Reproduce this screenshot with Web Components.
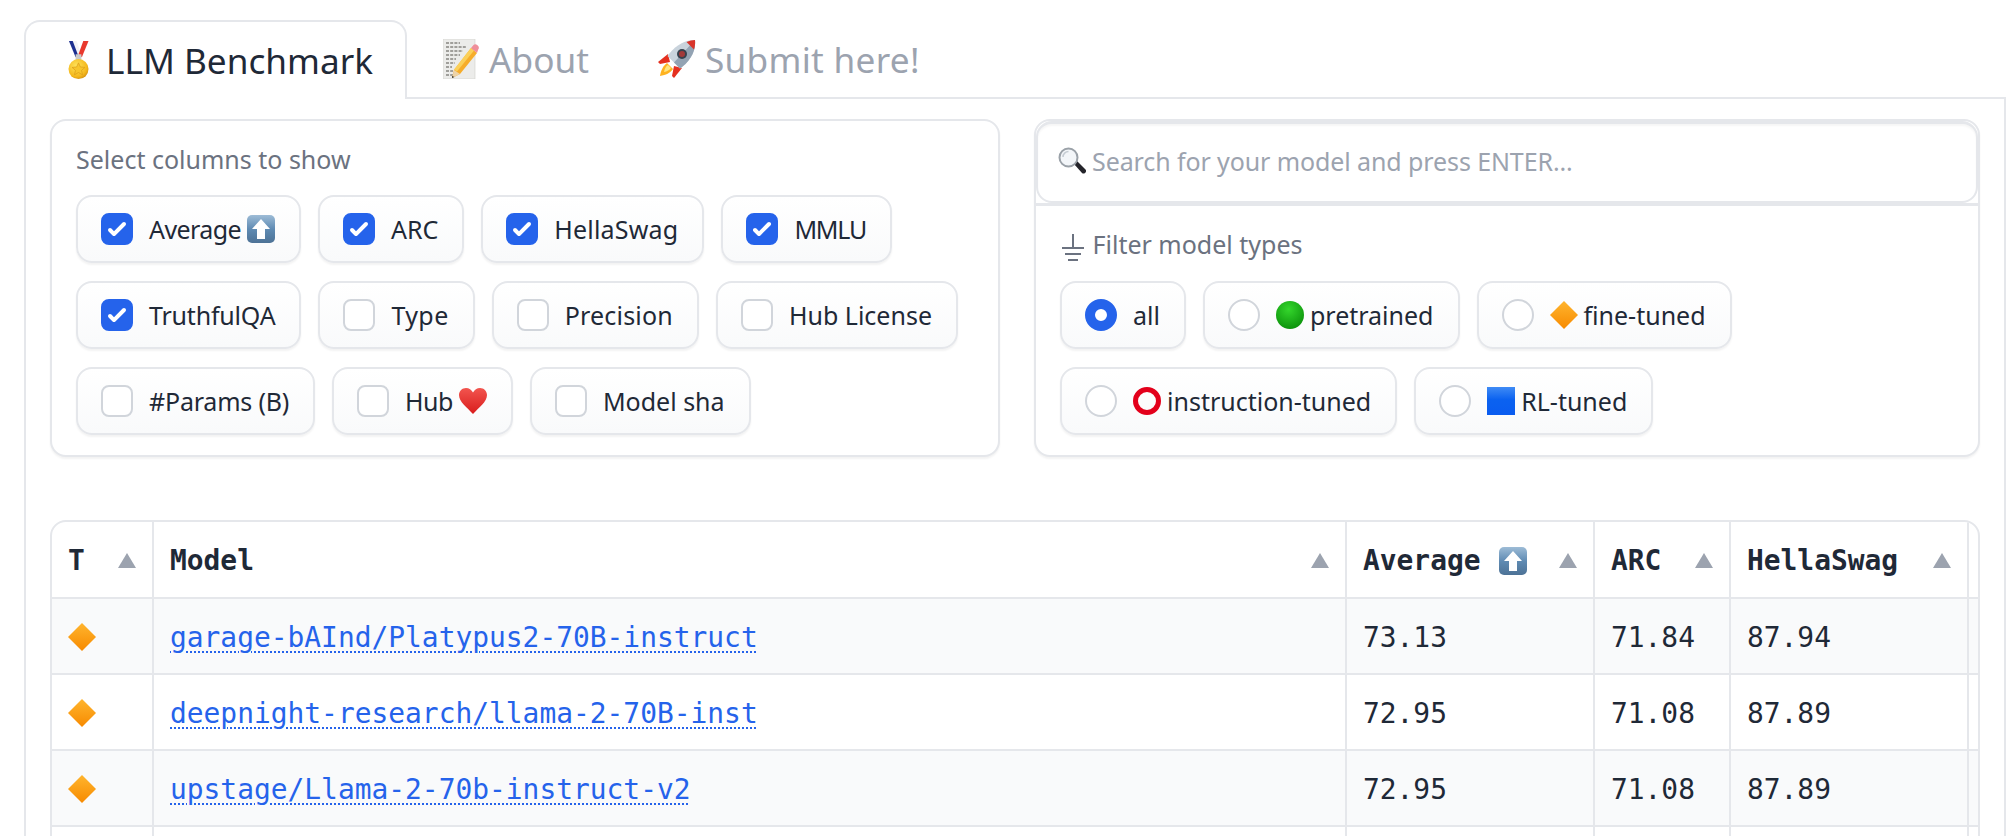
<!DOCTYPE html>
<html lang="en">
<head>
<meta charset="UTF-8">
<title>LLM Benchmark</title>
<style>
  html, body { margin: 0; height: 836px; overflow: hidden; background: #fff; }
  body { padding: 20px 0 0 24px; box-sizing: border-box; font-family: "Noto Sans", sans-serif; color: #1f2937; }
</style>
</head>
<body>

<tab-bar>
  <tab-button active icon="medal">LLM Benchmark</tab-button>
  <tab-button icon="memo">About</tab-button>
  <tab-button icon="rocket"><span style="letter-spacing:.3px">Submit here!</span></tab-button>
</tab-bar>

<tab-panel>
  <controls-row>
    <option-card>
      <span slot="title">Select columns to show</span>
      <option-chip checked><span style="letter-spacing:-.6px">Average</span><emoji-icon name="up" size="28"></emoji-icon></option-chip>
      <option-chip checked>ARC</option-chip>
      <option-chip checked><span style="letter-spacing:.2px">HellaSwag</span></option-chip>
      <option-chip checked><span style="letter-spacing:-1.2px">MMLU</span></option-chip>
      <option-chip checked><span style="letter-spacing:-.2px">TruthfulQA</span></option-chip>
      <option-chip><span style="letter-spacing:.4px">Type</span></option-chip>
      <option-chip><span style="letter-spacing:.2px">Precision</span></option-chip>
      <option-chip>Hub License</option-chip>
      <option-chip><span style="letter-spacing:-.2px">#Params (B)</span></option-chip>
      <option-chip><span style="letter-spacing:-.5px">Hub</span><emoji-icon name="heart" size="28"></emoji-icon></option-chip>
      <option-chip>Model sha</option-chip>
    </option-card>
    <search-card>
      <option-card flat>
        <span slot="title"><emoji-icon name="ground" size="22" style="margin:0 2px 0 2px"></emoji-icon> Filter model types</span>
        <option-chip radio checked>all</option-chip>
        <option-chip radio><emoji-icon name="green" size="28"></emoji-icon> pretrained</option-chip>
        <option-chip radio><emoji-icon name="diamond" size="28"></emoji-icon> fine-tuned</option-chip>
        <option-chip radio><emoji-icon name="ring" size="28"></emoji-icon> instruction-tuned</option-chip>
        <option-chip radio><emoji-icon name="square" size="28"></emoji-icon> RL-tuned</option-chip>
      </option-card>
    </search-card>
  </controls-row>
  <leaderboard-table></leaderboard-table>
</tab-panel>

<script>
  const EMOJI = {
    medal: `<svg viewBox="0 0 22 40" width="21" height="40">
      <defs><radialGradient id="g" cx=".4" cy=".35" r=".75"><stop offset="0" stop-color="#ffe45c"/><stop offset=".7" stop-color="#f4b81c"/><stop offset="1" stop-color="#c98410"/></radialGradient></defs>
      <path d="M1 0h5l6 14-4 3z" fill="#1c2f8f"/><path d="M5 0h4l4 11-2 5z" fill="#f3f3f6"/>
      <path d="M16 0h5.500l-7 17-3.500-3z" fill="#e8392e"/>
      <rect x="8" y="14" width="6" height="6" fill="#c9c9c9"/>
      <circle cx="11" cy="29.500" r="10.500" fill="url(#g)"/>
      <path d="M11 23l2 4.300 4.700.5-3.500 3.100 1 4.600-4.200-2.400-4.200 2.400 1-4.600-3.500-3.100 4.700-.5z" fill="#f7c52c" stroke="#d99a16" stroke-width=".7"/>
    </svg>`,
    memo: `<svg viewBox="0 0 36 40" width="36" height="40">
      <rect x="0" y="0" width="32" height="40" fill="#ececea" stroke="#cfcfca" stroke-width=".6"/>
      <g stroke="#55524c" stroke-width="1" stroke-dasharray="3 1.200">
        <path d="M3 4h14M3 8h20M3 12h17M3 16h14M3 20h10M3 24h9M3 28h6M3 32h7M3 36h8"/>
      </g>
      <path d="M28 9l6 5-17 21-8 4 2-8z" fill="#f6ad2b"/>
      <path d="M28 9l3 2.500-17 21-3-2z" fill="#fbd05a"/>
      <path d="M28 9l2.500-3c1-1 2.500-1 3.700 0l1 1c1 1 .8 2.500 0 3.500L34 14z" fill="#ef8f9a"/>
      <path d="M11 31l6 4-8 4z" fill="#edd3a8"/><path d="M9 37l2.500 1-2.500 1z" fill="#333"/>
    </svg>`,
    rocket: `<svg viewBox="0 0 40 40" width="40" height="40">
      <path d="M3 37c1-6 3-10 7-13l6 6c-3 4-7 6-13 7z" fill="#ffb320"/>
      <path d="M7 33c.5-3 2-6 4-7l3 3c-1.500 2-4 3.500-7 4z" fill="#ffe680"/>
      <path d="M11 15L1 23l2 2 10-2z" fill="#e5301f"/>
      <path d="M25 29l-8 10-2-2 2-10z" fill="#e5301f"/>
      <path d="M38 1c1 9-3 19-13 27l-2 1.500L10.500 17 12 15C20 5 29 1 38 1z" fill="#c9d3dc"/>
      <path d="M38 1c1 9-3 19-13 27l-2 1.500-6-6z" fill="#93a3b3"/>
      <path d="M38 1c.3 3 0 6-1 9.500L29.500 3C32.500 1.800 35 1.200 38 1z" fill="#d9342a"/>
      <circle cx="25" cy="15" r="5" fill="#37424e"/><circle cx="25" cy="15" r="3" fill="#a23a3a"/>
    </svg>`,
    up: `<svg viewBox="0 0 28 28" width="100%" height="100%">
      <defs><linearGradient id="g" x1="0" y1="0" x2="0" y2="1"><stop offset="0" stop-color="#9dbcd6"/><stop offset=".5" stop-color="#5f8bb3"/><stop offset="1" stop-color="#4d7296"/></linearGradient></defs>
      <rect width="28" height="28" rx="5" fill="url(#g)"/>
      <path d="M14 4l9 10h-5v10h-8V14H5z" fill="#fff"/>
    </svg>`,
    heart: `<svg viewBox="0 0 30 28" width="100%" height="100%">
      <defs><linearGradient id="g" x1="0" y1="0" x2="0" y2="1"><stop offset="0" stop-color="#f2554f"/><stop offset="1" stop-color="#d91c1c"/></linearGradient></defs>
      <path d="M15 28C9 21 0 15 0 7.500 0 3 3.500 0 7.500 0 10.800 0 13.500 1.800 15 5 16.500 1.800 19.200 0 22.500 0 26.500 0 30 3 30 7.500 30 15 21 21 15 28z" fill="url(#g)"/>
    </svg>`,
    search: `<svg viewBox="0 0 28 28" width="100%" height="100%">
      <path d="M16 17l3-3 8.500 8.500c.8.800.8 2 0 3l-.5.500c-1 .8-2.200.8-3 0z" fill="#24242a"/>
      <circle cx="10.500" cy="10.500" r="9" fill="#f3f6f9" stroke="#9aa1a8" stroke-width="2"/>
      <path d="M5 10c0-3 2.500-5.500 5.500-5.500" fill="none" stroke="#c5ccd3" stroke-width="1.500"/>
    </svg>`,
    ground: `<svg viewBox="0 0 22 28" width="22" height="28" fill="none" stroke="#6b7280" stroke-width="2">
      <path d="M11 1v13M0 15h22M3 21h16M6 27h10"/>
    </svg>`,
    green: `<svg viewBox="0 0 28 28" width="100%" height="100%">
      <defs><radialGradient id="g" cx=".45" cy=".3" r=".75"><stop offset="0" stop-color="#34d62c"/><stop offset="1" stop-color="#0a8f0a"/></radialGradient></defs>
      <circle cx="14" cy="14" r="14" fill="url(#g)"/>
    </svg>`,
    diamond: `<svg viewBox="0 0 28 28" width="100%" height="100%">
      <defs><linearGradient id="g" x1="0" y1="0" x2="0" y2="1"><stop offset="0" stop-color="#ffb52e"/><stop offset="1" stop-color="#f78a00"/></linearGradient></defs>
      <path d="M14 0l14 14-14 14L0 14z" fill="url(#g)"/>
    </svg>`,
    ring: `<svg viewBox="0 0 28 28" width="100%" height="100%">
      <circle cx="14" cy="14" r="11.500" fill="none" stroke="#e3001b" stroke-width="5"/>
    </svg>`,
    square: `<svg viewBox="0 0 28 28" width="100%" height="100%">
      <defs><linearGradient id="g" x1="0" y1="0" x2="0" y2="1"><stop offset="0" stop-color="#3f8bf5"/><stop offset=".45" stop-color="#0b62f0"/><stop offset="1" stop-color="#0a5cf0"/></linearGradient></defs>
      <rect width="28" height="28" fill="url(#g)"/>
    </svg>`
  };

  class EmojiIcon extends HTMLElement {
    connectedCallback() {
      const size = this.getAttribute('size');
      this.attachShadow({ mode: 'open' }).innerHTML = `
        <style>
          :host { display: inline-flex; align-items: center; justify-content: center; vertical-align: middle; flex: none; }
          svg { display: block; }
        </style>
        ${EMOJI[this.getAttribute('name')]}`;
      if (size) {
        this.style.width = size + 'px';
        this.style.height = size + 'px';
      }
    }
  }
  customElements.define('emoji-icon', EmojiIcon);

  class TabBar extends HTMLElement {
    constructor() {
      super();
      this.attachShadow({ mode: 'open' }).innerHTML = `
        <style>
          :host { display: flex; gap: 2px; border-bottom: 2px solid #e5e7eb; height: 77px; }
        </style>
        <slot></slot>`;
    }
  }
  customElements.define('tab-bar', TabBar);

  class TabButton extends HTMLElement {
    connectedCallback() {
      this.attachShadow({ mode: 'open' }).innerHTML = `
        <style>
          :host {
            display: flex; align-items: center; gap: 8px; padding: 0 32px;
            font-size: 35.200px; color: #9ca3af; border: 2px solid transparent; border-bottom: 0;
            margin-left: -2px; box-sizing: content-box; height: 75px;
          }
          :host([active]) {
            margin-left: 0; color: #1f2937; background: #fff; border-color: #e5e7eb;
            border-radius: 16px 16px 0 0; height: 77px; margin-bottom: -2px;
          }
          .ico { width: 40px; height: 40px; display: flex; justify-content: center; margin-top: -2px; }
          .txt { margin-top: -2px; }
        </style>
        <span class="ico"><emoji-icon name="${this.getAttribute('icon')}"></emoji-icon></span>
        <span class="txt"><slot></slot></span>`;
    }
  }
  customElements.define('tab-button', TabButton);

  class TabPanel extends HTMLElement {
    constructor() {
      super();
      this.attachShadow({ mode: 'open' }).innerHTML = `
        <style>
          :host {
            display: flex; flex-direction: column; gap: 63px; box-sizing: border-box;
            padding: 20px 24px 0; min-height: 800px;
            border: 2px solid #e5e7eb; border-top: 0;
          }
        </style>
        <slot></slot>`;
    }
  }
  customElements.define('tab-panel', TabPanel);

  class ControlsRow extends HTMLElement {
    constructor() {
      super();
      this.attachShadow({ mode: 'open' }).innerHTML = `
        <style>
          :host { display: grid; grid-template-columns: 950px 946px; gap: 34px; }
        </style>
        <slot></slot>`;
    }
  }
  customElements.define('controls-row', ControlsRow);

  class OptionCard extends HTMLElement {
    constructor() {
      super();
      this.attachShadow({ mode: 'open' }).innerHTML = `
        <style>
          :host {
            display: block; box-sizing: border-box; padding: 21px 24px 20px;
            background: #fff; border: 2px solid #e5e7eb; border-radius: 16px;
            box-shadow: 0 2px 2px rgba(0,0,0,.05);
          }
          :host([flat]) { border: 0; box-shadow: none; border-radius: 0; padding: 21px 24px 20px; background: transparent; }
          .title { display: block; font-size: 25px; line-height: 34px; color: #6b7280; margin-bottom: 19px; }
          :host([flat]) .title { margin-bottom: 20px; }
          .chips { display: flex; flex-wrap: wrap; gap: 18px 17px; }
        </style>
        <span class="title"><slot name="title"></slot></span>
        <div class="chips"><slot></slot></div>`;
    }
  }
  customElements.define('option-card', OptionCard);

  class OptionChip extends HTMLElement {
    connectedCallback() {
      const radio = this.hasAttribute('radio');
      const mark = radio
        ? '<span class="mark radio"></span>'
        : `<span class="mark box"><svg viewBox="0 0 16 16" width="32" height="32" fill="#fff"><path d="M12.207 4.793a1 1 0 010 1.414l-5 5a1 1 0 01-1.414 0l-2-2a1 1 0 011.414-1.414L6.500 9.086l4.293-4.293a1 1 0 011.414 0z"/></svg></span>`;
      this.attachShadow({ mode: 'open' }).innerHTML = `
        <style>
          :host {
            display: inline-flex; align-items: center; gap: 16px; box-sizing: border-box;
            height: 68px; padding: 0 24px 0 23px; font-size: 25px; color: #1f2937;
            background: linear-gradient(to top, #f9fafb, #fff);
            border: 2px solid #e5e7eb; border-radius: 16px;
            box-shadow: 0 2px 2px rgba(0,0,0,.05);
          }
          .mark { width: 32px; height: 32px; box-sizing: border-box; flex: none; display: block; background: #fff; border: 2px solid #d1d5db; }
          .box { border-radius: 8px; }
          .radio { border-radius: 50%; }
          svg { display: none; margin: -2px; }
          :host([checked]) .mark { background: #2563eb; border-color: #2563eb; }
          :host([checked]) svg { display: block; }
          :host([checked]) .radio { background: #fff; border: 10px solid #2563eb; }
          .lbl { white-space: nowrap; display: flex; align-items: center; gap: 6px; margin-top: -1px; }
        </style>
        ${mark}
        <span class="lbl"><slot></slot></span>`;
    }
  }
  customElements.define('option-chip', OptionChip);

  class SearchCard extends HTMLElement {
    constructor() {
      super();
      this.attachShadow({ mode: 'open' }).innerHTML = `
        <style>
          :host {
            display: block; box-sizing: border-box; background: #fff;
            border: 2px solid #e5e7eb; border-radius: 16px;
            box-shadow: 0 2px 2px rgba(0,0,0,.05);
          }
          .search {
            display: flex; align-items: center; gap: 6px; height: 82px; box-sizing: border-box;
            padding: 0 20px; font-size: 25px; color: #9ca3af;
            border: 2px solid #e5e7eb; border-top-width: 3px; border-radius: 16px;
            box-shadow: inset 0 2px 2px rgba(0,0,0,.04);
          }
          .search span { margin-top: -4px; letter-spacing: -.1px; }
          .search emoji-icon { margin-top: -4px; }
          .line { height: 3px; background: #e5e7eb; }
        </style>
        <div class="search"><emoji-icon name="search" size="28"></emoji-icon><span>Search for your model and press ENTER...</span></div>
        <div class="line"></div>
        <slot></slot>`;
    }
  }
  customElements.define('search-card', SearchCard);

  const ROWS = [
    ['garage-bAInd/Platypus2-70B-instruct', '73.13', '71.84', '87.94'],
    ['deepnight-research/llama-2-70B-inst', '72.95', '71.08', '87.89'],
    ['upstage/Llama-2-70b-instruct-v2', '72.95', '71.08', '87.89'],
    ['', '', '', '']
  ];

  class LeaderboardTable extends HTMLElement {
    constructor() {
      super();
      const sort = '<svg class="sort" viewBox="0 0 18 15" width="18" height="15"><path d="M9 0l9 15H0z" fill="#9ca3af"/></svg>';
      const head = (label, extra = '') => `<th><div class="th"><span class="name">${label}${extra}</span>${sort}</div></th>`;
      const body = ROWS.map(([model, avg, arc, hella]) => `
        <tr>
          <td>${model ? '<emoji-icon name="diamond" size="28"></emoji-icon>' : ''}</td>
          <td>${model ? `<a href="#">${model}</a>` : ''}</td>
          <td>${avg}</td><td>${arc}</td><td>${hella}</td><td></td>
        </tr>`).join('');
      this.attachShadow({ mode: 'open' }).innerHTML = `
        <style>
          :host { display: block; border: 2px solid #e5e7eb; border-radius: 16px; overflow: hidden; width: 1930px; box-sizing: border-box; }
          table { border-collapse: collapse; table-layout: fixed; width: 1926px; font-family: "DejaVu Sans Mono", monospace; font-size: 27.900px; color: #1f2937; }
          th, td { border-left: 2px solid #e5e7eb; padding: 2px 16px 0; text-align: left; overflow: hidden; white-space: nowrap; }
          th:first-child, td:first-child { border-left: 0; }
          th { height: 73px; border-bottom: 2px solid #e5e7eb; font-weight: 700; }
          td { height: 72px; border-bottom: 2px solid #e5e7eb; }
          tbody tr:nth-child(odd) { background: #f9fafb; }
          .th { display: flex; align-items: center; justify-content: space-between; }
          .name { display: flex; align-items: center; gap: 18px; }
          a { color: #2563eb; text-decoration: underline dotted 2px; text-underline-offset: 5px; }
          td:first-child emoji-icon { margin-top: -4px; }
        </style>
        <table>
          <colgroup><col style="width:101px"><col style="width:1193px"><col style="width:248px"><col style="width:136px"><col style="width:238px"><col></colgroup>
          <thead><tr>
            ${head('T')}${head('Model')}${head('Average', '<emoji-icon name="up" size="28"></emoji-icon>')}${head('ARC')}${head('HellaSwag')}<th></th>
          </tr></thead>
          <tbody>${body}</tbody>
        </table>`;
    }
  }
  customElements.define('leaderboard-table', LeaderboardTable);
</script>
</body>
</html>
